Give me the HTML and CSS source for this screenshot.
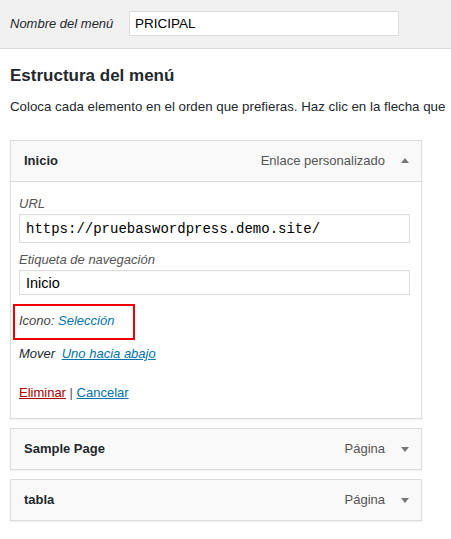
FILE: index.html
```html
<!DOCTYPE html>
<html lang="es">
<head>
    <meta charset="UTF-8">
    <meta name="viewport" content="width=device-width, initial-scale=1.0">
    <title>Menús</title>
    <link rel="stylesheet" href="styles.css">
</head>
<body>
    <div class="menu-header">
        <label for="menu-name">Nombre del menú</label>
        <input type="text" id="menu-name" class="menu-name" value="PRICIPAL">
    </div>

    <div class="menu-body">
        <h3>Estructura del menú</h3>
        <p class="menu-hint">Coloca cada elemento en el orden que prefieras. Haz clic en la flecha que</p>

        <ul class="menu-items">
            <li class="menu-item open">
                <div class="item-bar">
                    <span class="item-title">Inicio</span>
                    <span class="item-type">Enlace personalizado</span>
                    <span class="item-arrow up"></span>
                </div>
                <div class="item-settings">
                    <label class="field-label" for="url">URL</label>
                    <input type="text" id="url" class="field-url" value="https://pruebaswordpress.demo.site/">

                    <label class="field-label" for="nav-label">Etiqueta de navegación</label>
                    <input type="text" id="nav-label" class="field-text" value="Inicio">

                    <div class="icon-field">Icono: <a href="#">Selección</a></div>

                    <div class="move-field">Mover <a href="#">Uno hacia abajo</a></div>

                    <div class="item-actions">
                        <a href="#" class="delete">Eliminar</a> <span class="sep">|</span> <a href="#">Cancelar</a>
                    </div>
                </div>
            </li>
            <li class="menu-item">
                <div class="item-bar">
                    <span class="item-title">Sample Page</span>
                    <span class="item-type">Página</span>
                    <span class="item-arrow"></span>
                </div>
            </li>
            <li class="menu-item">
                <div class="item-bar">
                    <span class="item-title">tabla</span>
                    <span class="item-type">Página</span>
                    <span class="item-arrow"></span>
                </div>
            </li>
        </ul>
    </div>
</body>
</html>
```

FILE: styles.css
```css
body {
    font-family: "Liberation Sans", Arial, sans-serif;
    font-size: 13px;
    line-height: 18px;
    color: #23282d;
    background: #fff;
    margin: 0;
    overflow: hidden;
}

a {
    color: #0073aa;
}

.menu-header {
    display: flex;
    align-items: center;
    height: 48px;
    padding-left: 10px;
    background: #f1f1f1;
    border-bottom: 1px solid #dcdcdc;
}

.menu-header label {
    font-style: italic;
    width: 119px;
}

.menu-name {
    width: 270px;
    height: 25px;
    box-sizing: border-box;
    padding: 0 5px;
    font-family: inherit;
    font-size: 13.5px;
    color: #000;
    border: 1px solid #ddd;
    background: #fff;
    margin-top: -2px;
}

.menu-body {
    padding-left: 10px;
}

h3 {
    font-size: 17px;
    line-height: 20px;
    margin: 17px 0 0;
    font-weight: bold;
}

.menu-hint {
    margin: 12px 0 24px;
    font-size: 13.3px;
    white-space: nowrap;
}

.menu-items {
    list-style: none;
    margin: 0;
    padding: 0;
    width: 412px;
}

.menu-item {
    border: 1px solid #dcdcdc;
    box-shadow: 0 1px 1px rgba(0, 0, 0, 0.05);
    margin-bottom: 9px;
    background: #fff;
}

.item-bar {
    display: flex;
    align-items: center;
    height: 40px;
    padding: 0 12px 0 13px;
    background: #f9f9f9;
}

.item-title {
    font-weight: bold;
    flex: 1;
}

.item-type {
    color: #555;
    margin-right: 16px;
}

.item-arrow {
    width: 0;
    height: 0;
    border-left: 4px solid transparent;
    border-right: 4px solid transparent;
    border-top: 5px solid #777;
    margin-top: 1px;
}

.item-arrow.up {
    border-top: none;
    border-bottom: 5px solid #777;
    margin-top: -2px;
}

.item-settings {
    border-top: 1px solid #dcdcdc;
    padding: 13px 11px 16px 8px;
}

.field-label {
    display: block;
    font-style: italic;
    color: #555;
    margin-bottom: 1px;
}

.field-url,
.field-text {
    display: block;
    width: 100%;
    box-sizing: border-box;
    border: 1px solid #ddd;
    box-shadow: inset 0 1px 2px rgba(0, 0, 0, 0.04);
    padding: 0 6px;
    color: #000;
    background: #fff;
    margin: 0 0 8px;
}

.field-url {
    height: 29px;
    font-family: "Liberation Mono", "Courier New", monospace;
    font-size: 14px;
}

.field-text {
    height: 25px;
    font-family: inherit;
    font-size: 14.5px;
    margin-bottom: 9px;
}

.icon-field {
    width: 122px;
    box-sizing: border-box;
    margin-left: -6px;
    border: 2px solid #ee0000;
    padding: 6px 4px 8px;
    font-style: italic;
    color: #444;
}

.icon-field a {
    text-decoration: none;
}

.move-field {
    margin-top: 5px;
    font-style: italic;
    color: #23282d;
}

.move-field a {
    margin-left: 3px;
}

.item-actions {
    margin-top: 21px;
}

.item-actions .delete {
    color: #a00;
}

.item-actions .sep {
    color: #555;
}
```
